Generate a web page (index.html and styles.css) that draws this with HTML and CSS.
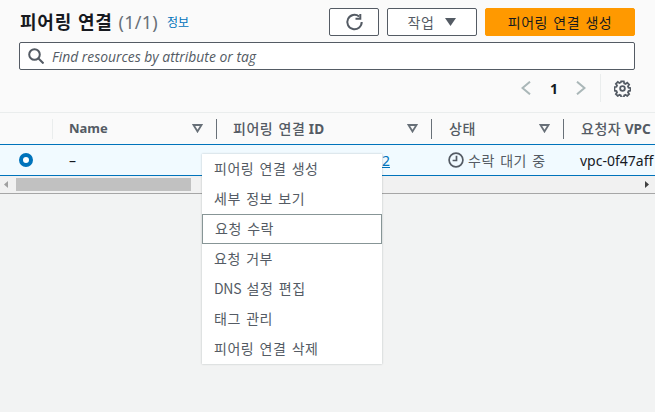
FILE: index.html
```html
<!DOCTYPE html>
<html lang="ko">
<head>
<meta charset="utf-8">
<title>피어링 연결</title>
<link rel="stylesheet" href="styles.css">
</head>
<body>
<div class="page">
  <section class="head">
    <div class="title-row">
      <h1 class="title">피어링 연결 <span class="count">(1/1)</span></h1>
      <a class="info">정보</a>
      <div class="actions">
        <button class="btn btn-icon"><svg width="20" height="20" viewBox="0 0 20 20" fill="none" stroke="#545b64" stroke-width="2"><path d="M17.700 10a7.200 7.200 0 1 1-2.600-5.500"/><path d="M16.300 2v4.800h-4.800"/></svg></button>
        <button class="btn btn-action">작업<svg width="11" height="8" viewBox="0 0 11 8"><path d="M0 0h11L5.500 8z" fill="#545b64"/></svg></button>
        <button class="btn btn-primary">피어링 연결 생성</button>
      </div>
    </div>
    <div class="search">
      <svg width="16" height="16" viewBox="0 0 16 16" fill="none" stroke="#545b64" stroke-width="2"><circle cx="6.500" cy="6.500" r="5.300"/><path d="M10.500 10.500l5 5"/></svg>
      <span class="placeholder">Find resources by attribute or tag</span>
    </div>
    <div class="pager">
      <svg width="10" height="14" viewBox="0 0 10 14" fill="none" stroke="#aab7b8" stroke-width="2"><path d="M9 .7L1.500 7 9 13.300"/></svg>
      <span class="page-num">1</span>
      <svg width="10" height="14" viewBox="0 0 10 14" fill="none" stroke="#aab7b8" stroke-width="2"><path d="M1 .7L8.500 7 1 13.300"/></svg>
      <span class="pager-sep"></span>
      <svg class="gear" width="17" height="17" viewBox="0 0 18 18" fill="none" stroke="#545b64" stroke-width="1.900"><circle cx="9" cy="9" r="2.500"/><path d="M7.600 1.400h2.800l.4 2.100 1.400.6 1.800-1.200 2 2-1.200 1.800.6 1.400 2.100.4v2.800l-2.100.4-.6 1.400 1.200 1.800-2 2-1.800-1.200-1.400.6-.4 2.100H7.600l-.4-2.100-1.400-.6-1.800 1.200-2-2 1.200-1.800-.6-1.400-2.100-.4V7.600l2.100-.4.6-1.400-1.200-1.800 2-2 1.800 1.200 1.400-.6z"/></svg>
    </div>
  </section>
  <section class="table">
    <div class="thead">
      <div class="th c-radio"></div>
      <div class="th c-name"><span>Name</span><svg class="sort" width="11" height="9" viewBox="0 0 11 9" fill="none" stroke="#687078" stroke-width="1.800"><path d="M1.500 1h8L5.500 7.500z"/></svg></div>
      <div class="th c-id"><span class="mixed"><span class="ko">피어링 연결</span> ID</span><svg class="sort" width="11" height="9" viewBox="0 0 11 9" fill="none" stroke="#687078" stroke-width="1.800"><path d="M1.500 1h8L5.500 7.500z"/></svg></div>
      <div class="th c-status"><span class="ko">상태</span><svg class="sort" width="11" height="9" viewBox="0 0 11 9" fill="none" stroke="#687078" stroke-width="1.800"><path d="M1.500 1h8L5.500 7.500z"/></svg></div>
      <div class="th c-vpc"><span class="mixed"><span class="ko">요청자</span> VPC</span></div>
    </div>
    <div class="tr">
      <div class="td c-radio"><span class="radio"></span></div>
      <div class="td c-name">–</div>
      <div class="td c-id"><a class="link">2</a></div>
      <div class="td c-status"><svg width="16" height="16" viewBox="0 0 16 16" fill="none" stroke="#545b64" stroke-width="1.700"><circle cx="8" cy="8" r="6.900"/><path d="M8.500 3.800v4.700H4.600"/></svg><span>수락 대기 중</span></div>
      <div class="td c-vpc">vpc-0f47aff</div>
    </div>
    <div class="scrollbar">
      <svg width="4" height="7" viewBox="0 0 4 7"><path d="M4 0v7L0 3.500z" fill="#a0a0a0"/></svg>
      <span class="thumb"></span>
      <svg width="4" height="7" viewBox="0 0 4 7"><path d="M0 0v7l4-3.500z" fill="#404040"/></svg>
    </div>
  </section>
  <ul class="menu">
    <li>피어링 연결 생성</li>
    <li>세부 정보 보기</li>
    <li class="focused">요청 수락</li>
    <li>요청 거부</li>
    <li><span class="latin">DNS</span> 설정 편집</li>
    <li>태그 관리</li>
    <li>피어링 연결 삭제</li>
  </ul>
</div>
</body>
</html>
```

FILE: styles.css
```css
* { box-sizing: border-box; }
html, body { margin: 0; padding: 0; }
body {
  width: 655px; height: 412px; overflow: hidden;
  background: #f2f3f3; color: #16191f;
  font-family: "Noto Sans", "Noto Sans CJK KR", sans-serif;
  font-size: 14px;
}
.page { position: relative; width: 655px; height: 412px; overflow: hidden; }
.head { background: #fafafa; height: 113px; padding: 8px 20px 0 20px; border-bottom: 1px solid #eaeded; }
.title-row { display: flex; align-items: center; height: 28px; }
.title { margin: 0 0 2px; font-size: 18px; font-weight: 700; line-height: 24px; letter-spacing: .8px; color: #16191f; font-family: "Noto Sans CJK KR", sans-serif; white-space: nowrap; }
.count { font-weight: 400; color: #687078; letter-spacing: .3px; font-family: "Noto Sans", sans-serif; }
.info { margin-left: 9px; font-size: 12px; color: #0073bb; font-family: "Noto Sans CJK KR", sans-serif; margin-bottom: 1px; }
.actions { margin-left: auto; display: flex; gap: 8px; }
.btn {
  height: 28px; border-radius: 2px; border: 1px solid #545b64; background: #fff;
  font: 400 14px "Noto Sans CJK KR", sans-serif; letter-spacing: .5px; word-spacing: 1px; color: #545b64;
  display: flex; align-items: center; justify-content: center; padding: 0 0 1px;
}
.btn-icon { width: 50px; padding: 0; }
.btn-action { width: 90px; gap: 11px; }
.btn-primary { width: 150px; background: #ff9900; border-color: #ff9900; color: #16191f; }
.search {
  margin: 6px 0 0 -1px; height: 28px; background: #fff; border: 1px solid #545b64; border-radius: 2px;
  display: flex; align-items: center; padding-left: 8px; gap: 8px;
}
.placeholder { font-style: italic; font-size: 13.9px; color: #545b64; font-family: "Open Sans", sans-serif; }
.pager { display: flex; align-items: center; justify-content: flex-end; margin-top: 4px; height: 28px; }
.page-num { font-weight: 700; font-size: 14px; margin: 0 18px 0 19px; color: #16191f; width: 8px; }
.pager-sep { width: 1px; height: 28px; background: #eaeded; margin: 0 13px 0 14px; }
.gear { margin-right: 4px; }
.table { background: #fafafa; }
.thead { display: flex; height: 32px; background: #fafafa; align-items: center; border-bottom: 1px solid #0073bb; }
.th { display: flex; align-items: center; height: 20px; font-weight: 700; font-size: 13px; color: #545b64; border-right: 1px solid #687078; padding: 0 16px; justify-content: space-between; white-space: nowrap; }
.th > span { position: relative; top: -.5px; }
.mixed { font-size: 13.6px; }
.ko { font-family: "Noto Sans CJK KR", sans-serif; font-size: 14px; font-weight: 500; letter-spacing: .5px; word-spacing: 1px; }
.c-radio { width: 53px; flex: none; padding: 0; }
.th.c-radio { border-right-color: #eaeded; }
.c-name { width: 164px; flex: none; }
.c-id { width: 215px; flex: none; }
.c-status { width: 132px; flex: none; }
.c-vpc { flex: 1; border-right: 0; }
.sort { margin-right: -3px; flex: none; }
.th.c-status, .th.c-vpc { padding-left: 17px; }
.tr { display: flex; height: 31px; background: #f1faff; align-items: center; border-bottom: 1px solid #0073bb; overflow: hidden; white-space: nowrap; }
.td { padding: 0 16px; display: flex; align-items: center; }
.td.c-radio { padding: 0 0 0 19px; }
.radio { width: 14px; height: 14px; border-radius: 50%; background: #fff; border: 4.500px solid #0073bb; }
.td.c-id { justify-content: flex-end; padding-right: 42px; }
.link { color: #0073bb; text-decoration: underline; }
.td.c-status { gap: 4px; color: #545b64; font-family: "Noto Sans CJK KR", sans-serif; letter-spacing: .5px; word-spacing: 1px; }
.scrollbar { display: flex; align-items: center; justify-content: space-between; height: 18px; background: #f1f1f1; padding: 0 6px 0 4px; border-bottom: 1px solid #a6a6a6; position: relative; }
.thumb { position: absolute; left: 16px; top: 2px; width: 175px; height: 13px; background: #c1c1c1; }
.menu {
  position: absolute; left: 202px; top: 154px; width: 180px; margin: 0; padding: 0; list-style: none;
  background: #fff; box-shadow: 0 0 2px rgba(0,28,36,.25);
  font-family: "Noto Sans CJK KR", sans-serif; font-size: 14px; letter-spacing: .5px; word-spacing: 1px; color: #545b64;
}
.menu li { height: 30px; line-height: 28px; padding-left: 12px; white-space: nowrap; }
.menu .focused { border: 1px solid #879596; line-height: 26px; }
.latin { letter-spacing: -.3px; }
```
